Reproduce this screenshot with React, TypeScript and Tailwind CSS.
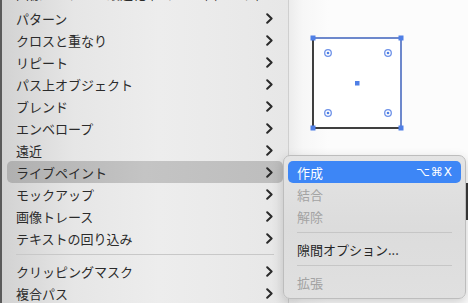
import React from "react";

const font = { fontFamily: '"Noto Sans CJK JP", "Noto Sans", sans-serif' };

function Chevron() {
  return (
    <svg width="7" height="11" viewBox="0 0 7 11" className="shrink-0">
      <path d="M1.2 1.2 L5.6 5.5 L1.2 9.8" fill="none" stroke="#2a2a2a" strokeWidth="2" strokeLinecap="round" strokeLinejoin="round" />
    </svg>
  );
}

type Item = { label: string; arrow?: boolean; active?: boolean; top?: boolean } | "sep";

const items: Item[] = [
  { label: "画像をピクセル最適化 (ピクセル) (ベータ)...", arrow: false, top: true },
  { label: "パターン", arrow: true },
  { label: "クロスと重なり", arrow: true },
  { label: "リピート", arrow: true },
  { label: "パス上オブジェクト", arrow: true },
  { label: "ブレンド", arrow: true },
  { label: "エンベロープ", arrow: true },
  { label: "遠近", arrow: true },
  { label: "ライブペイント", arrow: true, active: true },
  { label: "モックアップ", arrow: true },
  { label: "画像トレース", arrow: true },
  { label: "テキストの回り込み", arrow: true },
  "sep",
  { label: "クリッピングマスク", arrow: true },
  { label: "複合パス", arrow: true },
];

function Handle({ x, y }: { x: number; y: number }) {
  return <rect x={x - 2.5} y={y - 2.5} width="5" height="5" fill="#4f7fe6" />;
}

function Widget({ x, y }: { x: number; y: number }) {
  return (
    <g>
      <circle cx={x} cy={y} r="3.3" fill="none" stroke="#6e92e8" strokeWidth="1.3" />
      <circle cx={x} cy={y} r="1.3" fill="#4f7fe6" />
    </g>
  );
}

export default function App() {
  return (
    <div className="relative w-[468px] h-[303px] overflow-hidden flex bg-white" style={font}>
      {/* main menu */}
      <div className="w-[289px] h-full shrink-0 border-r border-[#cfcfcf] bg-[linear-gradient(90deg,#d2d2d2_0%,#e6e6e6_25%,#ededed_55%,#e7e7e7_100%)] border-l-[2px] border-l-[#5a5a5a]">
        <div className="-mt-[15px] flex flex-col">
          {items.map((it, i) =>
            it === "sep" ? (
              <div key={i} className="h-[11px] flex items-center px-[14px]">
                <div className="h-px w-full bg-[#c8c8c8]" />
              </div>
            ) : (
              <div
                key={i}
                className={`h-[22px] mx-[5px] pl-[9px] pr-[10px] rounded-[5px] flex items-center justify-between text-[13px] text-[#2b2b2b] ${
                  it.active ? "bg-[linear-gradient(90deg,#b0b0b0,#c4c4c4_50%,#bdbdbd)]" : ""
                }`}
              >
                <span className={`whitespace-nowrap leading-none ${it.top ? "-translate-y-[3px]" : ""}`}>{it.label}</span>
                {it.arrow && <Chevron />}
              </div>
            )
          )}
        </div>
      </div>

      {/* canvas */}
      <div className="flex-1 h-full bg-[linear-gradient(90deg,#ececec_0px,#f7f7f7_14px,#fcfcfc_40px)] relative">
        <svg width="179" height="303" className="absolute left-0 top-0">
          <rect x={24} y={38} width={88} height={90} fill="#ffffff" stroke="#111" strokeWidth="1.6" />
          <path d="M24 38 L112 38 L112 128" fill="none" stroke="#6d88cc" strokeWidth="2" />
          <Handle x={24} y={38} />
          <Handle x={112} y={38} />
          <Handle x={24} y={128} />
          <Handle x={112} y={128} />
          <rect x={66} y={81} width="4.5" height="4.5" fill="#4f7fe6" />
          <Widget x={39} y={53} />
          <Widget x={99} y={53} />
          <Widget x={39} y={113} />
          <Widget x={99} y={113} />
        </svg>
      </div>

      {/* dark strip at right */}
      <div className="absolute left-[465px] top-[183px] w-[3px] h-[37px] bg-[#3a3a3a]" />

      {/* submenu */}
      <div className="absolute left-[283px] top-[155px] w-[183px] h-[144px] rounded-[7px] border border-[#bdbdbd] bg-[linear-gradient(180deg,#e4e4e4,#dcdcdc_50%,#e0e0e0)] shadow-[0_4px_12px_rgba(0,0,0,0.18)] px-[4px] pt-[5px] flex flex-col">
        <div className="h-[22px] rounded-[5px] bg-[#3d86f6] flex items-center justify-between pl-[9px] pr-[8px] text-[13px] text-white">
          <span className="leading-none">作成</span>
          <span className="leading-none tracking-[1px]" style={{ fontFamily: '"DejaVu Sans", sans-serif', fontSize: 12 }}>⌥⌘X</span>
        </div>
        <div className="h-[22px] flex items-center pl-[9px] text-[13px] text-[#a3a3a3]"><span className="leading-none">結合</span></div>
        <div className="h-[22px] flex items-center pl-[9px] text-[13px] text-[#a3a3a3]"><span className="leading-none">解除</span></div>
        <div className="h-[11px] flex items-center px-[9px]"><div className="h-px w-full bg-[#c6c6c6]" /></div>
        <div className="h-[22px] flex items-center pl-[9px] text-[13px] text-[#262626]"><span className="leading-none">隙間オプション...</span></div>
        <div className="h-[11px] flex items-center px-[9px]"><div className="h-px w-full bg-[#c6c6c6]" /></div>
        <div className="h-[22px] flex items-center pl-[9px] text-[13px] text-[#a3a3a3]"><span className="leading-none">拡張</span></div>
      </div>
    </div>
  );
}
